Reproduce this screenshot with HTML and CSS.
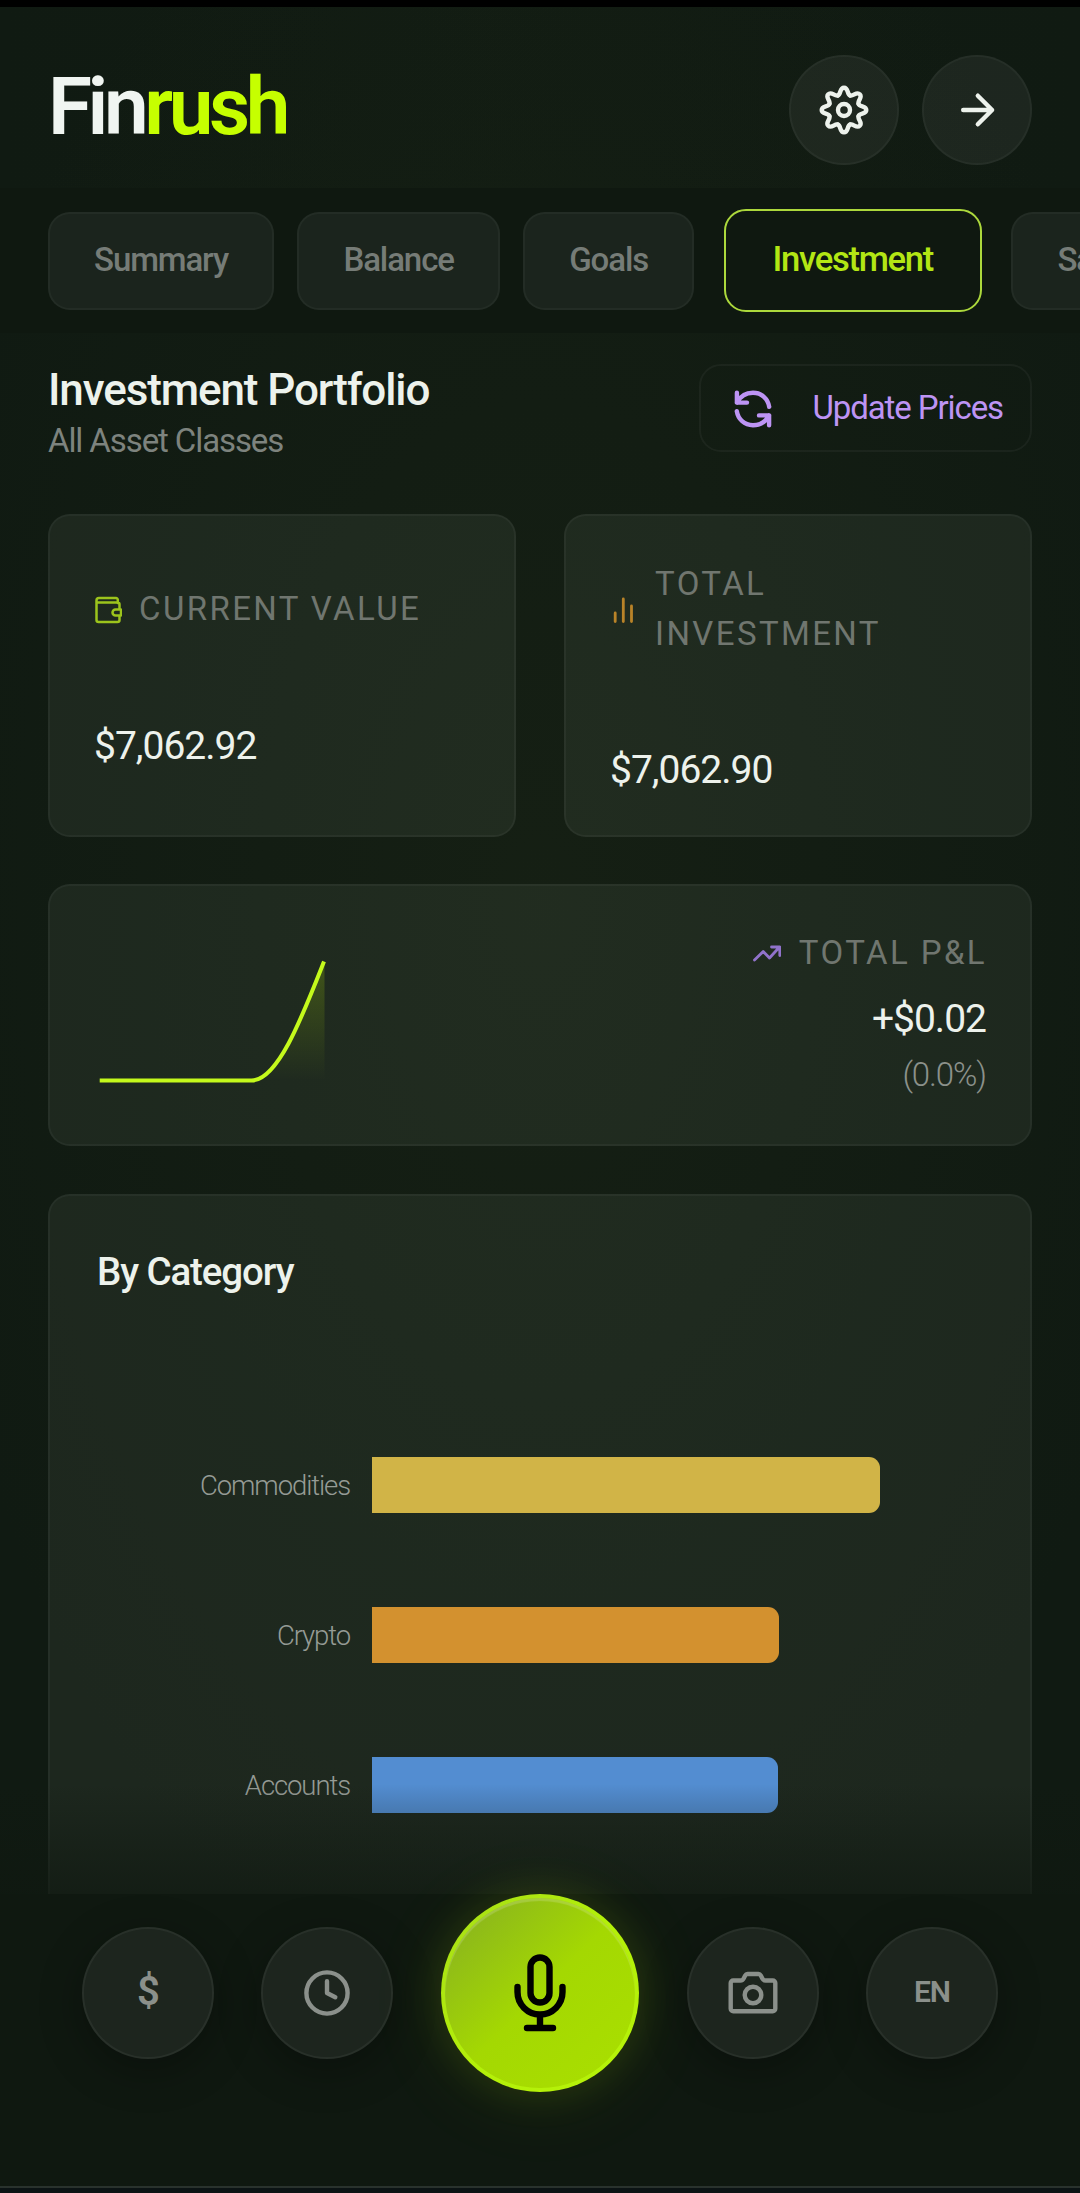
FILE: index.html
```html
<!DOCTYPE html>
<html lang="en">
<head>
<meta charset="utf-8">
<title>Finrush – Investment</title>
<link rel="stylesheet" href="styles.css">
</head>
<body>
<div class="status-edge"></div>
<header class="header">
  <div class="logo">Fin<span class="logo-accent">rush</span></div>
  <div class="header-actions">
    <button class="round-btn" aria-label="Settings">
      <svg class="icon-md" viewBox="-27 -27 54 54">
        <defs><path id="tooth" d="M-6.05-14.6C-2.8-15.9-4.6-22.3 0-22.3S2.8-15.9 6.05-14.6"/></defs>
        <use href="#tooth"/><use href="#tooth" transform="rotate(45)"/><use href="#tooth" transform="rotate(90)"/><use href="#tooth" transform="rotate(135)"/><use href="#tooth" transform="rotate(180)"/><use href="#tooth" transform="rotate(225)"/><use href="#tooth" transform="rotate(270)"/><use href="#tooth" transform="rotate(315)"/>
        <circle r="6"/>
      </svg>
    </button>
    <button class="round-btn" aria-label="Continue">
      <svg class="icon-md" viewBox="-27 -27 54 54"><path d="M-13.8 0H15M.8-14.3 15.1 0 .8 14.3"/></svg>
    </button>
  </div>
</header>

<nav class="tabs">
  <a class="tab">Summary</a>
  <a class="tab">Balance</a>
  <a class="tab">Goals</a>
  <a class="tab tab-active">Investment</a>
  <a class="tab">Savings</a>
</nav>

<main class="content">
  <section class="heading">
    <div>
      <h1 class="title">Investment Portfolio</h1>
      <p class="subtitle">All Asset Classes</p>
    </div>
    <button class="update-btn">
      <svg class="update-icon" viewBox="-20 -20 40 40"><path d="M-16.1-16.2V-6.4H-6M-16.1-6.4C-12.5-13.2-7-16.2 0-16.2 8.6-16.2 15-10.2 16.2-2.2M16.1 16.2V6.4H6M16.1 6.4C12.5 13.2 7 16.2 0 16.2-8.6 16.2-15 10.2-16.2 2.2"/></svg>
      Update Prices
    </button>
  </section>

  <section class="stats">
    <article class="card stat">
      <div class="label">
        <svg class="label-icon wallet" viewBox="0 0 28 28"><path d="M2.500 6.500V4.500a2.500 2.500 0 0 1 2.500-2.500H22a1.800 1.800 0 0 1 1.800 1.800V7M2.500 6.500H23.500a2 2 0 0 1 2 2V13.500M25.500 19.500V24a2 2 0 0 1-2 2H4.500a2 2 0 0 1-2-2V6.500M27 13.500V19.500H21.500a3 3 0 0 1 0-6Z"/></svg>
        <span>CURRENT VALUE</span>
      </div>
      <div class="value">$7,062.92</div>
    </article>
    <article class="card stat stat-wrapped">
      <div class="label">
        <svg class="label-icon bars" viewBox="0 0 28 28"><path d="M5.2 17V25.5M13.3 3V25.5M21.5 10V25.5"/></svg>
        <span>TOTAL INVESTMENT</span>
      </div>
      <div class="value">$7,062.90</div>
    </article>
  </section>

  <section class="card pnl">
    <svg class="sparkline" viewBox="0 0 230 130">
      <defs>
        <linearGradient id="area" x1="0" y1="0" x2="0" y2="1">
          <stop offset="0" stop-color="#c6ff00" stop-opacity=".2"/>
          <stop offset="1" stop-color="#c6ff00" stop-opacity="0"/>
        </linearGradient>
      </defs>
      <path d="M0 122.500H153C180 122.500 206 55 225.500 4V122.500Z" fill="url(#area)"/>
      <path d="M0.700 122.500H152.500C179 122.500 203.500 58 225 3.500" fill="none" stroke="#c4f91c" stroke-width="4"/>
    </svg>
    <div class="pnl-text">
      <div class="label">
        <svg class="label-icon trend" viewBox="0 0 28 28"><path d="M1.5 21 10.2 12.5 16.5 19 26.5 8M18.5 8H26.8V16.5"/></svg>
        <span>TOTAL P&amp;L</span>
      </div>
      <div class="value">+$0.02</div>
      <div class="percent">(0.0%)</div>
    </div>
  </section>

  <section class="card category">
    <h2 class="category-title">By Category</h2>
    <div class="chart-row"><span class="chart-label">Commodities</span><div class="bar bar-gold" style="width:508px"></div></div>
    <div class="chart-row"><span class="chart-label">Crypto</span><div class="bar bar-orange" style="width:407px"></div></div>
    <div class="chart-row"><span class="chart-label">Accounts</span><div class="bar bar-blue" style="width:406px"></div></div>
  </section>
  <div class="fade"></div>
</main>

<footer class="dock">
  <button class="dock-btn dock-dollar">$</button>
  <button class="dock-btn" aria-label="History">
    <svg class="icon-md" viewBox="-27 -27 54 54"><circle r="20.600"/><path d="M0-11.800V0L8.300 4.200"/></svg>
  </button>
  <button class="mic-btn" aria-label="Voice input">
    <svg class="mic-icon" viewBox="-42 -42 84 84"><rect x="-9.500" y="-35.500" width="19" height="45" rx="9.500"/><path d="M-22.500-6V-1A22.500 22.500 0 0 0 22.500-1V-6M0 21.500V35M-13 35H13"/></svg>
  </button>
  <button class="dock-btn" aria-label="Camera">
    <svg class="icon-md" viewBox="-27 -27 54 54"><path d="M-19.800-12.500H-12.500Q-10.500-12.500-9.500-14.300L-7.800-17.500Q-7-19-5.500-19H5.500Q7-19 7.800-17.500L9.500-14.300Q10.500-12.500 12.500-12.500H19.800A2.500 2.500 0 0 1 22.300-10V15.700A2.500 2.500 0 0 1 19.800 18.200H-19.800A2.500 2.500 0 0 1-22.300 15.700V-10A2.500 2.500 0 0 1-19.800-12.500Z"/><circle cy="2" r="8.300"/></svg>
  </button>
  <button class="dock-btn dock-lang">EN</button>
</footer>
<div class="bottom-edge"></div>
</body>
</html>
```
FILE: styles.css
```css
* { box-sizing: border-box; margin: 0; }

body {
  width: 1080px;
  height: 2193px;
  display: flex;
  flex-direction: column;
  overflow: hidden;
  font-family: Roboto, "Liberation Sans", sans-serif;
  letter-spacing: -1.1px;
  color: #edf2ec;
  background:
    radial-gradient(ellipse 640px 1150px at 540px 900px, rgba(40, 50, 26, .22), transparent),
    #101a12;
}

button {
  padding: 0;
  border: 0;
  background: none;
  color: inherit;
  font: inherit;
  letter-spacing: inherit;
  display: flex;
  align-items: center;
  justify-content: center;
}

svg {
  display: block;
  flex: none;
  fill: none;
  stroke: currentColor;
  stroke-width: 4.4;
  stroke-linecap: round;
  stroke-linejoin: round;
}

.icon-md { width: 54px; height: 54px; }

.status-edge { height: 7px; flex: none; background: #000; }

.header {
  height: 181px;
  flex: none;
  padding: 48px 48px 0;
  display: flex;
  justify-content: space-between;
  align-items: flex-start;
  background: linear-gradient(90deg, rgba(28, 38, 22, 0), rgba(28, 38, 22, .12) 45%, rgba(28, 38, 22, 0));
}

.logo {
  font-size: 80px;
  font-weight: 600;
  line-height: 105px;
  letter-spacing: -4.4px;
  color: #f0f5f1;
}

.logo-accent { color: #c6ff00; }

.header-actions { display: flex; gap: 23px; }

.round-btn {
  width: 110px;
  height: 110px;
  border-radius: 50%;
  border: 2px solid rgba(255, 255, 255, .04);
  background: rgba(255, 255, 255, .055);
}

.tabs {
  height: 145px;
  flex: none;
  padding: 24px 0 0 48px;
  display: flex;
  gap: 23.4px;
  overflow: hidden;
  background: #0f1810;
}

.tab {
  height: 98px;
  flex: none;
  padding: 0 44px;
  border: 2px solid rgba(255, 255, 255, .04);
  border-radius: 22px;
  background: rgba(240, 255, 248, .055);
  color: #767c77;
  font-size: 33px;
  font-weight: 500;
  line-height: 91px;
}

.tab-active {
  height: 103px;
  margin: -3px 6px 0;
  padding: 0 47px;
  border-color: #acd83c;
  background: none;
  color: #b3e614;
  font-size: 34.65px;
  line-height: 97px;
  letter-spacing: -1.3px;
}

.content {
  position: relative;
  height: 1560.5px;
  flex: none;
  padding: 29px 48px 0;
  display: flex;
  flex-direction: column;
  gap: 48px;
  overflow: hidden;
}

.heading {
  height: 104px;
  flex: none;
  display: flex;
  justify-content: space-between;
  align-items: flex-start;
}

.title { padding-top: 1px; font-size: 44px; font-weight: 500; line-height: 54px; }

.subtitle { font-size: 33px; line-height: 48px; color: #7d837e; }

.update-btn {
  height: 88px;
  width: 333px;
  margin-top: 2px;
  padding: 0 27px 2px 0;
  justify-content: flex-end;
  gap: 40px;
  border: 2px solid rgba(255, 255, 255, .045);
  border-radius: 22px;
  color: #bd94f4;
  font-size: 33px;
}

.update-icon { width: 40px; height: 40px; margin-top: 3px; }

.card {
  flex: none;
  border: 2px solid rgba(255, 255, 255, .04);
  border-radius: 22px;
  background: rgba(240, 255, 245, .058);
}

.stats {
  flex: none;
  display: grid;
  grid-template-columns: 1fr 1fr;
  gap: 48px;
}

.stat { height: 323px; padding: 43px 45px 0 44px; }

.label {
  display: flex;
  align-items: center;
  gap: 17px;
  color: #70766f;
  font-size: 33px;
  line-height: 50px;
  letter-spacing: 2.4px;
}

.stat .label { height: 100px; }

.label-icon { width: 28px; height: 28px; margin-top: 2px; stroke-width: 2.4; }

.wallet { color: #9cc41c; stroke-width: 2.5; }
.bars { color: #b98328; stroke-width: 2.8; }
.trend { color: #9173cb; margin-top: 0; stroke-width: 2.8; }

.value { font-size: 39px; line-height: 46px; letter-spacing: -1px; }

.stat .value { margin-top: 64px; }
.stat-wrapped .value { margin-top: 88px; }

.pnl {
  height: 262px;
  margin-top: -1px;
  padding: 42px 45px 0 49px;
  display: flex;
  justify-content: space-between;
}

.sparkline { width: 230px; height: 130px; margin-top: 30px; stroke: none; stroke-linecap: butt; }

.pnl-text { display: flex; flex-direction: column; align-items: flex-end; }
.pnl-text .label { gap: 18px; margin-right: -2px; }
.pnl-text .value { margin-top: 18px; margin-right: -1px; }

.percent {
  margin: 8px -1px 0 0;
  color: #8b918b;
  font-size: 33px;
  font-weight: 300;
  line-height: 50px;
}

.category { height: 760px; padding: 53px 48px 0 47px; }

.category-title {
  margin-bottom: 115px;
  font-size: 38.5px;
  font-weight: 500;
  line-height: 46px;
}

.chart-row { height: 150px; display: flex; align-items: center; gap: 22px; }

.chart-label {
  width: 253px;
  text-align: right;
  color: #959b95;
  font-size: 27.5px;
  font-weight: 300;
}

.bar { height: 56px; border-radius: 0 11px 11px 0; }
.bar-gold { background: #d1b447; }
.bar-orange { background: #d3912f; }
.bar-blue { background: #538dd1; }

.fade {
  position: absolute;
  left: 0;
  right: 0;
  bottom: 0;
  height: 110px;
  background: linear-gradient(rgba(15, 24, 16, 0), rgba(15, 24, 16, .65));
}

.dock {
  position: relative;
  height: 292.5px;
  flex: none;
  display: flex;
  justify-content: center;
  align-items: flex-start;
  gap: 47px;
  background: #0f1810;
}

.dock-btn {
  width: 132px;
  height: 132px;
  margin-top: 33px;
  border-radius: 50%;
  border: 2px solid rgba(255, 255, 255, .05);
  background: #1d251e;
  box-shadow: 0 11px 44px rgba(0, 0, 0, .3);
  color: #8b908b;
}

.dock-dollar { font-size: 40px; font-weight: 600; padding-bottom: 2px; }
.dock-lang { font-size: 30px; font-weight: 600; padding-bottom: 3px; }

.mic-btn {
  width: 198px;
  height: 198px;
  margin: 0 1px;
  border-radius: 50%;
  border: 4px solid rgba(190, 255, 15, .6);
  background: linear-gradient(135deg, #87b021 5%, #a4d802 50%, #aae000) border-box;
  box-shadow: inset 0 3px 1px rgba(255, 255, 255, .18), 0 8px 90px rgba(198, 255, 0, .07), 0 0 44px rgba(198, 255, 0, .12);
  color: #000;
}

.mic-icon { width: 84px; height: 84px; stroke-width: 6.4; }

.bottom-edge { flex: 1; border-top: 2px solid #29322d; background: #0b1314; }
```
